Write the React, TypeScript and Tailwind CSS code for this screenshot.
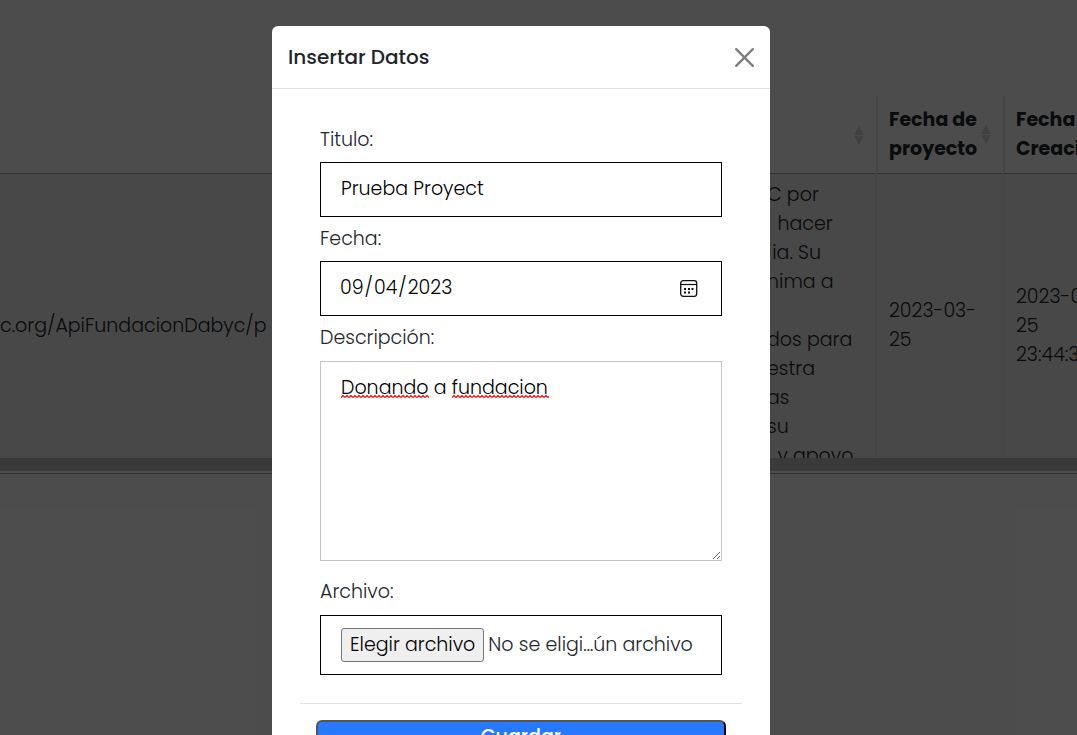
import React from 'react';

const descriptionLines = [
  'C por',
  '  hacer',
  ' ia. Su',
  'nima a',
  '',
  'dos para',
  'estra',
  'as',
  'su',
  '  y apoyo',
];

function SortIcon() {
  return (
    <svg className="mr-3 ml-auto shrink-0" width="10" height="20" viewBox="0 0 10 20" fill="#dadada" aria-hidden="true">
      <path d="M5 1 10 10H0z" />
      <path d="M0 11h10L5 20z" />
    </svg>
  );
}

function Squiggle({ className }: { className: string }) {
  return (
    <svg className={className} height="3" aria-hidden="true">
      <defs>
        <pattern id="squiggle" width="4" height="3" patternUnits="userSpaceOnUse">
          <path d="M0 2.5 2 0.5 4 2.5" fill="none" stroke="#ff0000" strokeWidth="1.2" />
        </pattern>
      </defs>
      <rect width="100%" height="3" fill="url(#squiggle)" />
    </svg>
  );
}

function ProjectsTable() {
  return (
    <div className="pt-24">
      <div className="h-[362px] overflow-hidden">
        <table className="w-[1160px] table-fixed border-collapse text-left leading-[29px]">
          <colgroup>
            <col className="w-[500px]" />
            <col className="w-[376px]" />
            <col className="w-[127px]" />
            <col />
          </colgroup>
          <thead>
            <tr className="border-b border-[#a9a9a9]">
              <th />
              <th className="p-0">
                <div className="flex items-center"><SortIcon /></div>
              </th>
              <th className="p-0">
                <div className="flex items-center border-l-2 border-[#e6e6e6] pt-[9px] pb-[10px] pl-[11px] font-bold">
                  <span>Fecha de<br />proyecto</span>
                  <SortIcon />
                </div>
              </th>
              <th className="p-0">
                <div className="border-l-2 border-[#e6e6e6] pt-[9px] pb-[10px] pl-[11px] font-bold">Fecha de<br />Creación</div>
              </th>
            </tr>
          </thead>
          <tbody>
            <tr className="bg-[#f2f2f2] font-light">
              <td className="py-1.5">c.org/ApiFundacionDabyc/p</td>
              <td className="py-1.5 pl-[267px] whitespace-pre">
                {descriptionLines.map((line, i) => (
                  <div key={i} className="h-[29px]">{line}</div>
                ))}
              </td>
              <td className="border-l-2 border-[#e6e6e6] py-1.5 pl-3">2023-03-<br />25</td>
              <td className="border-l-2 border-[#e6e6e6] py-1.5 pl-3">2023-03-<br />25<br />23:44:32</td>
            </tr>
          </tbody>
        </table>
      </div>
      <div className="h-[13px] bg-[#c1c1c1]" />
      <div className="h-[3px] border-b border-[#a9a9a9]" />
    </div>
  );
}

const field = 'block h-[55px] w-full rounded-none border border-black bg-white text-black outline-none';
const label = 'flex h-11 items-center';

function InsertDialog() {
  return (
    <div role="dialog" aria-modal="true" aria-labelledby="dialog-title" className="mx-auto mt-[26px] w-full max-w-[498px] rounded-md bg-white">
      <header className="flex h-[63px] items-center justify-between border-b border-[#dee2e6] px-4">
        <h5 id="dialog-title" className="text-[20px] font-medium">Insertar Datos</h5>
        <button type="button" aria-label="Cerrar" className="text-black/50">
          <svg width="19" height="19" viewBox="0 0 16 16" fill="currentColor">
            <path d="M.293.293a1 1 0 0 1 1.414 0L8 6.586 14.293.293a1 1 0 1 1 1.414 1.414L9.414 8l6.293 6.293a1 1 0 0 1-1.414 1.414L8 9.414l-6.293 6.293a1 1 0 0 1-1.414-1.414L6.586 8 .293 1.707a1 1 0 0 1 0-1.414z" />
          </svg>
        </button>
      </header>
      <form>
        <div className="px-12 pt-[29px] font-light">
          <label htmlFor="titulo" className={label}>Titulo:</label>
          <input id="titulo" type="text" defaultValue="Prueba Proyect" className={`${field} px-5 pb-0.5`} />
          <label htmlFor="fecha" className={label}>Fecha:</label>
          <div className="relative">
            <input id="fecha" type="date" defaultValue="2023-09-04" className={`${field} pr-5 pl-[18px] [&::-webkit-calendar-picker-indicator]:opacity-0 [&::-webkit-datetime-edit-fields-wrapper]:p-0`} />
            <svg className="pointer-events-none absolute top-[18px] right-6" width="18" height="18" viewBox="0 0 18 18" fill="none" stroke="#111" aria-hidden="true">
              <rect x="0.7" y="1.7" width="16" height="15.6" rx="2.5" strokeWidth="1.3" />
              <path d="M1 5.5h16" strokeWidth="1.2" />
              <path d="M4 10h2M8 10h2M11.5 10h2M4 13.5h2M8 13.5h2" strokeWidth="2" />
            </svg>
          </div>
          <label htmlFor="descripcion" className={label}>Descripción:</label>
          <div className="relative pt-px">
            <textarea id="descripcion" spellCheck={false} defaultValue="Donando a fundacion" className="block h-[200px] w-full resize border border-[#c4c4c4] bg-white px-5 py-3 leading-[28px] text-black outline-none" />
            <Squiggle className="pointer-events-none absolute top-[35px] left-[21px] w-[88px]" />
            <Squiggle className="pointer-events-none absolute top-[35px] left-[132px] w-[97px]" />
          </div>
          <label htmlFor="archivo" className="flex h-[54px] items-center pt-2">Archivo:</label>
          <div className="relative flex h-[60px] items-center gap-1 border border-black px-5 whitespace-nowrap">
            <span className="rounded-[3px] border border-[#767676] bg-[#efefef] px-2 leading-8 text-black">Elegir archivo</span>
            <span>No se eligi…ún archivo</span>
            <input id="archivo" type="file" className="absolute inset-0 w-full cursor-pointer opacity-0" />
          </div>
        </div>
        <footer className="mx-7 mt-7 border-t border-[#dee2e6] px-4 pt-4 pb-4">
          <button type="submit" className="h-[34px] w-full rounded-md border-2 border-black bg-[#2779ff] font-medium text-white [border-style:outset]">Guardar</button>
        </footer>
      </form>
    </div>
  );
}

export default function App() {
  return (
    <main className="relative h-screen overflow-hidden bg-white font-['Poppins',Inter,sans-serif] text-[19px] text-[#212529]">
      <ProjectsTable />
      <div className="absolute inset-0 overflow-hidden bg-black/70 pr-[35px]">
        <InsertDialog />
      </div>
    </main>
  );
}
